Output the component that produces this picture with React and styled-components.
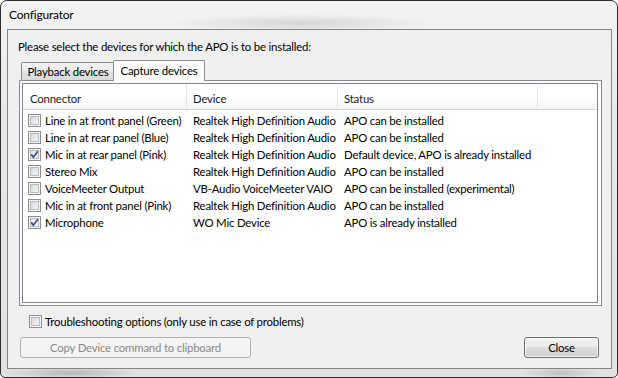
import React from 'react';
import styled, { createGlobalStyle } from 'styled-components';

const FONT = `Lato, "Open Sans", sans-serif`;

const Global = createGlobalStyle`
  html, body { margin: 0; padding: 0; background: #ffffff; }
  body { font-family: ${FONT}; font-size: 11.4px; letter-spacing: -0.2px; color: #000; }
  * { box-sizing: border-box; }
`;

const Window = styled.div`
  width: 618px;
  height: 378px;
  border: 1px solid #2e2e2e;
  border-radius: 7px 7px 5px 5px;
  display: flex;
  flex-direction: column;
  padding: 0 5px 8px 6px;
  background:
    radial-gradient(ellipse 130px 9px at 300px 22px, rgba(160,160,160,0.35), rgba(160,160,160,0) 100%),
    radial-gradient(ellipse 70px 6px at 70px 372px, rgba(140,140,140,0.5), rgba(140,140,140,0) 100%),
    radial-gradient(ellipse 40px 6px at 560px 372px, rgba(140,140,140,0.4), rgba(140,140,140,0) 100%),
    linear-gradient(180deg, #f4f4f4 0%, #e8e8e8 30%, #e2e2e2 100%);
  overflow: hidden;
`;

const TitleBar = styled.div`
  height: 28px;
  flex: none;
  display: flex;
  align-items: center;
  padding-left: 2px;
  padding-bottom: 1px;
  font-size: 12px;
  color: #000;
`;

const Client = styled.div`
  flex: 1;
  border: 1px solid #858585;
  background: #f0f0f0;
  display: flex;
  flex-direction: column;
  padding: 0 9px 0 11px;
`;

const Prompt = styled.div`
  margin: 9px 0 0 -1px;
  line-height: 15px;
  height: 15px;
  white-space: nowrap;
`;

const TabStrip = styled.div`
  margin-top: 6px;
  height: 20px;
  display: flex;
  align-items: flex-end;
  padding-left: 2px;
  position: relative;
  z-index: 1;
`;

const Tab = styled.div`
  height: ${p => (p.$active ? 21 : 18)}px;
  width: ${p => p.$w}px;
  margin-left: ${p => (p.$active ? -2 : 0)}px;
  margin-bottom: ${p => (p.$active ? -1 : 0)}px;
  border: 1px solid #898c95;
  border-bottom: none;
  border-radius: 2px 2px 0 0;
  background: ${p => (p.$active
    ? '#fcfcfc'
    : 'linear-gradient(180deg, #f3f3f3 0%, #ebebeb 50%, #e2e2e2 50%, #dadada 100%)')};
  display: flex;
  align-items: center;
  justify-content: center;
  padding-bottom: ${p => (p.$active ? 2 : 1)}px;
  line-height: 15px;
  white-space: nowrap;
  position: relative;
  z-index: ${p => (p.$active ? 2 : 1)};
`;

const TabPanel = styled.div`
  height: 226px;
  border: 1px solid #898c95;
  background: #fcfcfc;
  padding: 2px 3px 2px 2px;
  display: flex;
`;

const ListView = styled.div`
  flex: 1;
  border: 1px solid #828790;
  background: #ffffff;
  display: flex;
  flex-direction: column;
`;

const Header = styled.div`
  height: 26px;
  display: flex;
  border-bottom: 1px solid #d5d5d5;
  background: linear-gradient(180deg, #ffffff 0%, #ffffff 45%, #f4f5f7 100%);
`;

const HeaderCell = styled.div`
  width: ${p => p.$w}px;
  flex: ${p => (p.$grow ? 1 : 'none')};
  border-right: ${p => (p.$grow ? 'none' : '1px solid #e3e8ee')};
  padding-left: ${p => p.$pad}px;
  display: flex;
  align-items: center;
  padding-top: 4px;
  color: #1e1e1e;
`;

const Rows = styled.div`
  padding-top: 2px;
  display: flex;
  flex-direction: column;
`;

const Row = styled.div`
  height: 17px;
  display: flex;
  align-items: center;
  line-height: 15px;
`;

const Cell = styled.div`
  width: ${p => p.$w}px;
  flex: none;
  padding-left: ${p => p.$pad}px;
  display: flex;
  align-items: center;
  gap: 4px;
  white-space: nowrap;
  overflow: hidden;
`;

const BoxWrap = styled.span`
  width: 13px;
  height: 13px;
  flex: none;
  border: 1px solid #8e8f8f;
  background: #f4f4f4;
  padding: 1px;
  display: inline-flex;
  position: relative;
`;

const BoxInner = styled.span`
  flex: 1;
  border: 1px solid #b7bbc1;
  background: ${p => (p.$checked
    ? 'linear-gradient(135deg, #e4e6ea 0%, #fbfbfb 100%)'
    : 'linear-gradient(135deg, #d6d9de 0%, #f4f4f4 100%)')};
`;

const CheckSvg = styled.svg`
  position: absolute;
  left: 0;
  top: 0;
`;

const Checkbox = ({ checked }) => (
  <BoxWrap>
    <BoxInner $checked={checked} />
    {checked && (
      <CheckSvg width="11" height="11" viewBox="0 0 11 11">
        <path d="M2.2 5.4 L4.4 8.2 L8.8 2.2" fill="none" stroke="#3b4f8a" strokeWidth="1.7" strokeLinecap="butt" strokeLinejoin="miter" />
      </CheckSvg>
    )}
  </BoxWrap>
);

const OptionRow = styled.label`
  margin-top: 9px;
  height: 13px;
  display: flex;
  align-items: center;
  gap: 3px;
  padding-left: 10px;
  line-height: 15px;
`;

const ButtonRow = styled.div`
  margin-top: 9px;
  display: flex;
  justify-content: space-between;
  padding: 0 3px 0 1px;
`;

const Button = styled.button`
  width: ${p => p.$w}px;
  height: 21px;
  font-family: ${FONT};
  font-size: 11.4px;
  letter-spacing: -0.2px;
  line-height: 15px;
  padding: 0 0 1px;
  border-radius: 3px;
  border: 1px solid ${p => (p.disabled ? '#adb2b5' : '#707070')};
  color: ${p => (p.disabled ? '#8a8a8a' : '#000')};
  background: ${p => (p.disabled
    ? '#f4f4f4'
    : 'linear-gradient(180deg, #f2f2f2 0%, #ebebeb 50%, #dddddd 50%, #cfcfcf 100%)')};
  box-shadow: ${p => (p.disabled ? 'none' : 'inset 0 0 0 1px rgba(255,255,255,0.7)')};
`;

const rows = [
  ['Line in at front panel (Green)', 'Realtek High Definition Audio', 'APO can be installed', false],
  ['Line in at rear panel (Blue)', 'Realtek High Definition Audio', 'APO can be installed', false],
  ['Mic in at rear panel (Pink)', 'Realtek High Definition Audio', 'Default device, APO is already installed', true],
  ['Stereo Mix', 'Realtek High Definition Audio', 'APO can be installed', false],
  ['VoiceMeeter Output', 'VB-Audio VoiceMeeter VAIO', 'APO can be installed (experimental)', false],
  ['Mic in at front panel (Pink)', 'Realtek High Definition Audio', 'APO can be installed', false],
  ['Microphone', 'WO Mic Device', 'APO is already installed', true],
];

export default function App() {
  return (
    <>
      <Global />
      <Window>
        <TitleBar>Configurator</TitleBar>
        <Client>
          <Prompt>Please select the devices for which the APO is to be installed:</Prompt>
          <TabStrip>
            <Tab $w={94}>Playback devices</Tab>
            <Tab $w={92} $active>Capture devices</Tab>
          </TabStrip>
          <TabPanel>
            <ListView>
              <Header>
                <HeaderCell $w={164} $pad={7}>Connector</HeaderCell>
                <HeaderCell $w={151} $pad={6}>Device</HeaderCell>
                <HeaderCell $w={200} $pad={6}>Status</HeaderCell>
                <HeaderCell $grow />
              </Header>
              <Rows>
                {rows.map(([c, d, s, ch]) => (
                  <Row key={c}>
                    <Cell $w={164} $pad={5}><Checkbox checked={ch} />{c}</Cell>
                    <Cell $w={151} $pad={6}>{d}</Cell>
                    <Cell $w={200} $pad={6}>{s}</Cell>
                  </Row>
                ))}
              </Rows>
            </ListView>
          </TabPanel>
          <OptionRow>
            <Checkbox checked={false} />
            Troubleshooting options (only use in case of problems)
          </OptionRow>
          <ButtonRow>
            <Button $w={231} disabled>Copy Device command to clipboard</Button>
            <Button $w={75}>Close</Button>
          </ButtonRow>
        </Client>
      </Window>
    </>
  );
}
